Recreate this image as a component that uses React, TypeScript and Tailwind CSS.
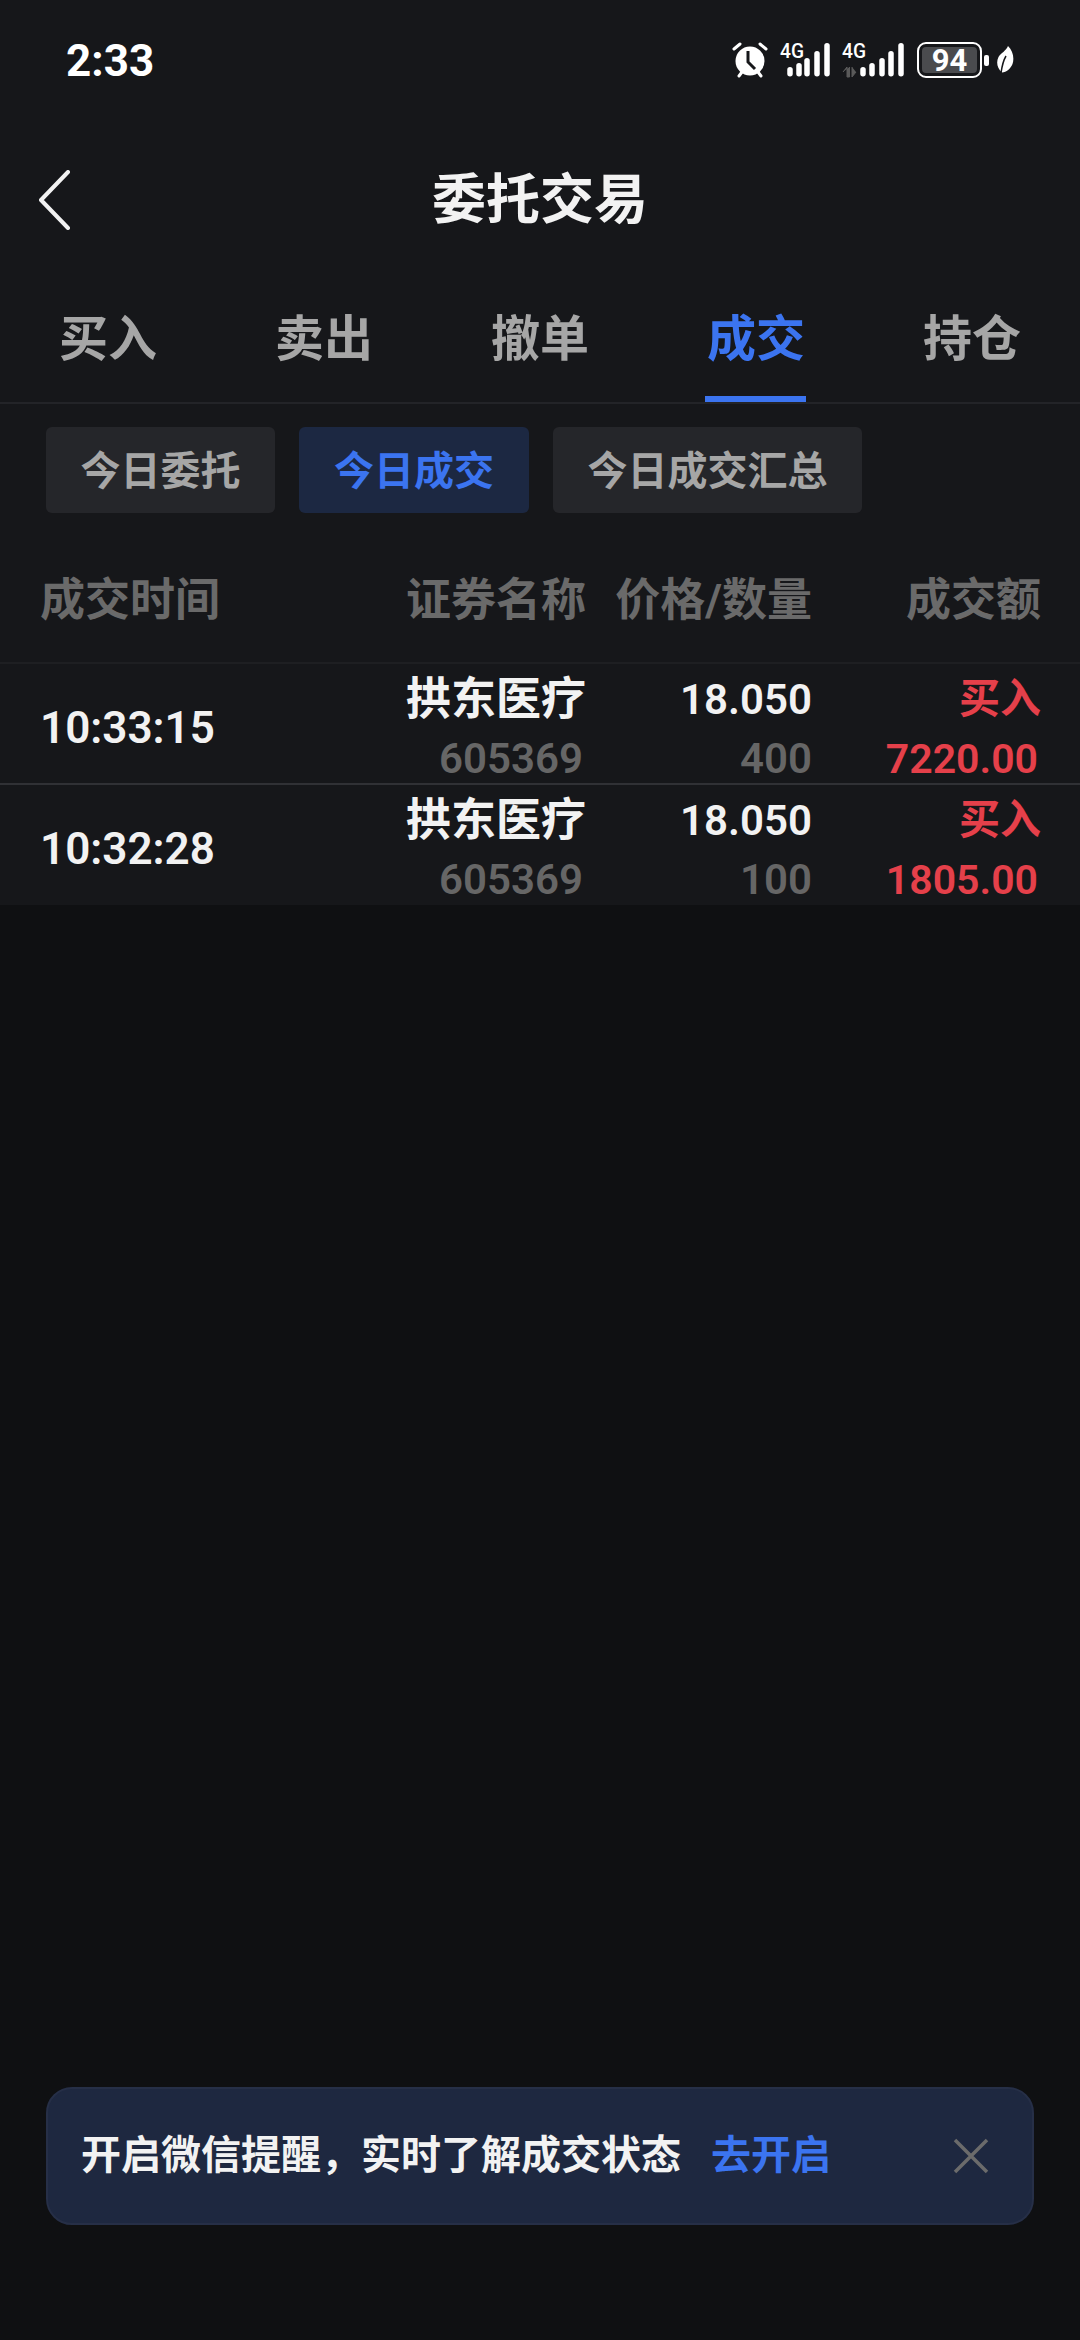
import React from "react";

const CJK = "font-['Roboto','Noto_Sans_CJK_SC',sans-serif]";

function Alarm() {
  return (
    <svg width="36" height="36" viewBox="0 0 36 36" className="block">
      <circle cx="18" cy="19" r="14.5" fill="#fff" />
      <path d="M16 9v11l7 7" fill="none" stroke="#16171a" strokeWidth="3" />
      <path d="M2 7l6-5M34 7l-6-5M7 34l3-4M29 34l-3-4" stroke="#fff" strokeWidth="3" strokeLinecap="round" />
    </svg>
  );
}

function Signal({ arrows, w }: { arrows?: boolean; w: number }) {
  const xs = arrows ? [21, 30, 40, 49, 59] : [10, 19, 27, 37, 47];
  const tops = [25, 21, 16, 9, 1];
  return (
    <svg width={w} height="36" viewBox={`0 0 ${w} 36`} className="block overflow-visible">
      <text x="0" y="16" fill="#fff" fontSize="21" fontWeight="500" fontFamily="Roboto, sans-serif" textLength="24" lengthAdjust="spacingAndGlyphs">4G</text>
      {arrows && (
        <path d="M1 30l4-5v10h2.5V25M10 25v10l4-5" fill="#5a5a5a" stroke="#5a5a5a" strokeWidth="1" />
      )}
      {xs.map((x, i) => (
        <rect key={x} x={x - 2.75} y={tops[i]} width="5.5" height={34.5 - tops[i]} rx="2.75" fill="#fff" />
      ))}
    </svg>
  );
}

function Battery() {
  return (
    <div className="flex items-center gap-[2px]">
      <div className="relative w-[65px] h-[36px] rounded-[9px] border-[2px] border-white p-[3px]">
        <div className="w-[55px] h-full rounded-[4px] bg-[#4a4b4e]" />
        <span className="absolute inset-0 flex items-center justify-center text-[31px] leading-none font-bold text-white font-['Roboto',sans-serif]">94</span>
      </div>
      <div className="w-[5px] h-[11px] rounded-[2px] bg-white" />
    </div>
  );
}

function Leaf() {
  return (
    <svg width="18" height="30" viewBox="0 0 18 30" className="block">
      <path d="M12 1c5 5 6.5 12 4.5 18-2 5-6 8-10.5 8.5C1 23 0 17 2.5 12 5 8 10 6 12 1z" fill="#fff" />
      <path d="M5 28C6 21 7 16 10 11" stroke="#16171a" strokeWidth="1.5" fill="none" />
    </svg>
  );
}

const tabs = ["买入", "卖出", "撤单", "成交", "持仓"];
const rows = [
  { t: "10:33:15", q: "400", a: "7220.00" },
  { t: "10:32:28", q: "100", a: "1805.00" },
];

export default function App() {
  return (
    <div className={`w-[1080px] h-[2340px] bg-[#0f1012] flex flex-col ${CJK}`}>
      <div className="bg-[#16171a]">
        <div className="h-[120px] flex items-center justify-between pl-[66px] pr-[66px]">
          <span className="text-[44px] font-bold text-white font-['Roboto',sans-serif] pt-[2px]">2:33</span>
          <div className="flex items-center">
            <Alarm />
            <div className="w-[12px]" />
            <Signal w={52} />
            <div className="w-[10px]" />
            <Signal arrows w={65} />
            <div className="w-[10px]" />
            <Battery />
            <div className="w-[7px]" />
            <Leaf />
          </div>
        </div>
        <div className="h-[160px] relative flex items-center justify-center pt-[2px]">
          <svg width="34" height="60" viewBox="0 0 34 60" className="absolute left-[37px] top-[50px]">
            <path d="M31 2L4 30l27 28" fill="none" stroke="#f2f2f2" strokeWidth="4" strokeLinecap="round" strokeLinejoin="round" />
          </svg>
          <span className="text-[54px] leading-none font-bold text-[#f2f2f2]">委托交易</span>
        </div>
        <div className="grid grid-cols-5 h-[124px] border-b-[2px] border-[#232428]">
          {tabs.map((t) => (
            <div key={t} className="relative flex justify-center pt-[34px]">
              <span className={`text-[49px] leading-[52px] font-bold ${t === "成交" ? "text-[#3b74f0]" : "text-[#a6a6a6]"}`}>{t}</span>
              {t === "成交" && <div className="absolute bottom-0 left-[57px] w-[101px] h-[6px] bg-[#3b74f0]" />}
            </div>
          ))}
        </div>
        <div className="flex gap-[24px] pl-[46px] pt-[23px]">
          <div className="w-[229px] h-[86px] pt-[4px] rounded-[6px] bg-[#25262a] flex items-center justify-center text-[40px] text-[#a6a6a6] font-bold">今日委托</div>
          <div className="w-[230px] h-[86px] pt-[4px] rounded-[6px] bg-[#1c2842] flex items-center justify-center text-[40px] text-[#3b74f0] font-bold">今日成交</div>
          <div className="w-[309px] h-[86px] pt-[4px] rounded-[6px] bg-[#25262a] flex items-center justify-center text-[40px] text-[#a6a6a6] font-bold">今日成交汇总</div>
        </div>
        <div className="grid [grid-template-columns:546px_226px_229px] h-[151px] pl-[40px] items-center pt-[25px] text-[45px] leading-none text-[#6a6a6a] font-bold border-b-[2px] border-[#1e1f22]">
          <div className="flex justify-between"><span>成交时间</span><span>证券名称</span></div>
          <div className="text-right">价格/数量</div>
          <div className="text-right">成交额</div>
        </div>
        {rows.map((r, i) => (
          <div key={r.t} className={`grid [grid-template-columns:546px_226px_229px] pl-[40px] pt-[4px] items-center ${i === 0 ? "h-[121px] border-b-[2px] border-[#303135]" : "h-[120px]"}`}>
            <div className="flex justify-between items-center">
              <span className="text-[44px] font-semibold text-[#f2f2f2] leading-none">{r.t}</span>
              <div className="flex flex-col items-end">
                <span className="text-[45px] leading-[63px] font-bold text-[#f2f2f2]">拱东医疗</span>
                <span className="text-[42px] leading-[56px] font-semibold text-[#666666] pr-[3px]">605369</span>
              </div>
            </div>
            <div className="flex flex-col items-end">
              <span className="text-[42px] leading-[63px] font-semibold text-[#f2f2f2]">18.050</span>
              <span className="text-[42px] leading-[56px] font-semibold text-[#666666]">{r.q}</span>
            </div>
            <div className="flex flex-col items-end">
              <span className="text-[41px] leading-[63px] font-bold text-[#e5404a]">买入</span>
              <span className="text-[41px] leading-[56px] font-semibold text-[#e5404a] pr-[3px]">{r.a}</span>
            </div>
          </div>
        ))}
      </div>
      <div className="mt-auto mb-[115px] mx-[46px] h-[138px] rounded-[26px] bg-[#1e2840] border-[2px] border-[#262f47] flex items-center pl-[33px] pr-[43px]">
        <span className="text-[40px] font-bold text-[#f2f2f2]">开启微信提醒，实时了解成交状态</span>
        <span className="text-[40px] font-bold text-[#3b74f0] ml-[30px]">去开启</span>
        <svg width="36" height="36" viewBox="0 0 36 36" className="ml-auto">
          <path d="M2 2l32 32M34 2L2 34" stroke="#6b6b6b" strokeWidth="3.5" fill="none" />
        </svg>
      </div>
    </div>
  );
}
